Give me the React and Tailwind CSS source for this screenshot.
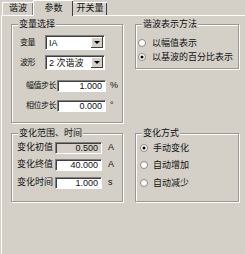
import React from "react";

const font = "font-['Liberation_Sans','Noto_Sans_CJK_SC',sans-serif]";

function Group({ title, className = "", children }) {
  return (
    <div
      className={`relative border border-[#9a9790] shadow-[inset_1px_1px_0_#fff,1px_1px_0_#fff] ${className}`}
    >
      <span className="absolute -top-[7px] left-[6px] bg-[#d4d0c8] px-[1px] leading-[12px]">
        {title}
      </span>
      {children}
    </div>
  );
}

function Sunken({ className = "", children }) {
  return (
    <div
      className={`flex items-center border-t border-l border-[#808080] border-b border-r border-b-white border-r-white shadow-[inset_1px_1px_0_#404040] ${className}`}
    >
      {children}
    </div>
  );
}

function Select({ value }) {
  return (
    <Sunken className="w-[60px] h-[15px] bg-white">
      <span className="flex-1 pl-[3px] leading-[12px] truncate">{value}</span>
      <div className="mr-[1px] flex h-[11px] w-[12px] items-center justify-center bg-[#d4d0c8] shadow-[inset_-1px_-1px_0_#404040,inset_1px_1px_0_#fff]">
        <svg width="6" height="4" viewBox="0 0 6 4">
          <path d="M0 0h6L3 3z" fill="#000" />
        </svg>
      </div>
    </Sunken>
  );
}

function NumInput({ value, w, disabled }) {
  return (
    <Sunken className={`h-[12px] ${w} ${disabled ? "bg-[#d4d0c8]" : "bg-white"}`}>
      <span className="flex-1 pr-[3px] text-right leading-[10px]">{value}</span>
    </Sunken>
  );
}

function Radio({ checked, label, gap }) {
  return (
    <div className="flex h-[12px] items-center">
      <svg width="8" height="8" viewBox="0 0 8 8">
        <circle cx="4" cy="4" r="3.5" fill="#fff" stroke="#8a8780" strokeWidth="1" />
        {checked && <circle cx="4" cy="4" r="1.5" fill="#000" />}
      </svg>
      <span className={`${gap} leading-[12px]`}>{label}</span>
    </div>
  );
}

export default function App() {
  return (
    <div className={`${font} w-[245px] h-[254px] bg-[#d4d0c8] text-[9px] text-[#111] overflow-hidden`}>
      {/* tabs */}
      <div className="flex h-[15px] items-end pl-[2px]">
        <div className="flex h-[13px] w-[31px] items-center justify-center border-t border-l border-white shadow-[inset_-1px_0_0_#808080]">
          谐波
        </div>
        <div className="relative z-10 -mb-[1px] flex h-[16px] w-[40px] items-start justify-center pt-[1px] border-t border-l border-white bg-[#d4d0c8] shadow-[inset_-1px_0_0_#404040]">
          参数
        </div>
        <div className="flex h-[13px] w-[34px] items-center justify-center border-t border-white shadow-[inset_-1px_0_0_#404040]">
          开关量
        </div>
      </div>

      {/* panel */}
      <div className="ml-[1px] h-[239px] border-t border-l border-white pl-[9px] pt-[8px]">
        <div className="grid grid-cols-[112px_104px] grid-rows-[99px_69px] gap-x-[12px] gap-y-[10px]">
          <Group title="变量选择" className="pl-[8px] pt-[10px]">
            <div className="flex h-[15px] items-center">
              <span className="w-[25px] text-[8px] tracking-[-0.5px]">变量</span>
              <Select value="IA" />
            </div>
            <div className="mt-[5px] flex h-[15px] items-center">
              <span className="w-[25px] text-[8px] tracking-[-0.5px]">波形</span>
              <Select value="2 次谐波" />
            </div>
            <div className="mt-[9px] flex h-[13px] items-center">
              <span className="w-[37px] pl-[6px] text-[8px] tracking-[-0.5px]">幅值步长</span>
              <NumInput value="1.000" w="w-[49px]" />
              <span className="ml-[4px]">%</span>
            </div>
            <div className="mt-[7px] flex h-[13px] items-center">
              <span className="w-[37px] pl-[6px] text-[8px] tracking-[-0.5px]">相位步长</span>
              <NumInput value="0.000" w="w-[49px]" />
              <span className="ml-[4px]">°</span>
            </div>
          </Group>

          <Group title="谐波表示方法" className="self-start h-[45px] pl-[2px] pt-[12px]">
            <Radio label="以幅值表示" gap="ml-[6px]" />
            <div className="mt-[2px]">
              <Radio checked label="以基波的百分比表示" gap="ml-[6px]" />
            </div>
          </Group>

          <Group title="变化范围、时间" className="pl-[5px] pt-[8px]">
            <div className="flex h-[12px] items-center">
              <span className="w-[38px]">变化初值</span>
              <NumInput value="0.500" w="w-[47px]" disabled />
              <span className="ml-[6px]">A</span>
            </div>
            <div className="mt-[5px] flex h-[12px] items-center">
              <span className="w-[38px]">变化终值</span>
              <NumInput value="40.000" w="w-[47px]" />
              <span className="ml-[6px]">A</span>
            </div>
            <div className="mt-[6px] flex h-[12px] items-center">
              <span className="w-[38px]">变化时间</span>
              <NumInput value="1.000" w="w-[47px]" />
              <span className="ml-[6px]">s</span>
            </div>
          </Group>

          <Group title="变化方式" className="pl-[4px] pt-[8px]">
            <Radio checked label="手动变化" gap="ml-[5px]" />
            <div className="mt-[5px]">
              <Radio label="自动增加" gap="ml-[5px]" />
            </div>
            <div className="mt-[6px]">
              <Radio label="自动减少" gap="ml-[5px]" />
            </div>
          </Group>
        </div>
      </div>
    </div>
  );
}
